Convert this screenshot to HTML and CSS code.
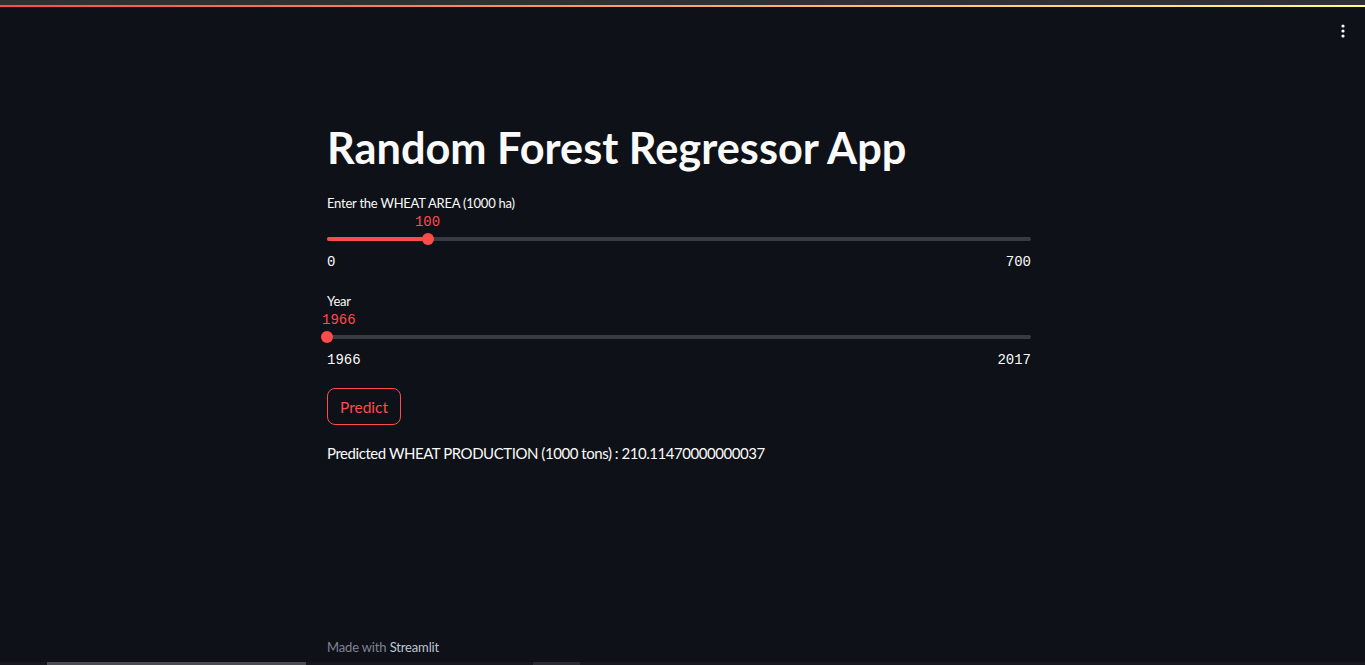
FILE: index.html
```html
<!DOCTYPE html>
<html>
<head>
<meta charset="utf-8">
<link rel="stylesheet" href="styles.css">
</head>
<body>
<div class="topbar"></div>
<div class="decoration"></div>
<button class="menu" aria-label="menu">
  <svg width="4" height="14" viewBox="0 0 4 14"><circle cx="2" cy="2" r="1.6" fill="#fafafa"/><circle cx="2" cy="7" r="1.6" fill="#fafafa"/><circle cx="2" cy="12" r="1.6" fill="#fafafa"/></svg>
</button>
<main class="main">
  <h1 class="title">Random Forest Regressor App</h1>
  <div class="slider-block first">
    <div class="label">Enter the WHEAT AREA (1000 ha)</div>
    <div class="slider">
      <div class="track">
        <div class="fill" style="width:14.2857%"></div>
        <div class="thumb" style="left:14.2857%"><span class="value">100</span></div>
      </div>
    </div>
    <div class="ticks"><span>0</span><span>700</span></div>
  </div>
  <div class="slider-block">
    <div class="label">Year</div>
    <div class="slider">
      <div class="track">
        <div class="fill" style="width:0%"></div>
        <div class="thumb" style="left:0%"><span class="value clamp">1966</span></div>
      </div>
    </div>
    <div class="ticks"><span>1966</span><span>2017</span></div>
  </div>
  <button class="predict">Predict</button>
  <p class="result">Predicted WHEAT PRODUCTION (1000 tons) : 210.11470000000037</p>
</main>
<footer class="footer">Made with <span class="brand">Streamlit</span></footer>
<div class="scrollbar"><div class="sb-thumb"></div><div class="sb-gap"></div><div class="sb-thumb2"></div></div>
</body>
</html>
```
FILE: styles.css
```css
* { box-sizing: border-box; }
html, body { margin: 0; padding: 0; }
body {
  background: #0e1117;
  color: #fafafa;
  font-family: "Lato", "Noto Sans", sans-serif;
  width: 1365px;
  height: 665px;
  overflow: hidden;
  position: relative;
  display: flex;
  flex-direction: column;
}
.topbar { height: 5px; background: #2f3033; }
.decoration { height: 2px; background: linear-gradient(90deg, #ff4b4b, #ffff80); }
.menu {
  position: absolute;
  top: 22px;
  left: 1337px;
  width: 12px;
  height: 18px;
  padding: 0;
  border: none;
  background: transparent;
  display: flex;
  align-items: center;
  justify-content: center;
}
.main {
  width: 704px;
  margin: 0 0 0 327px;
  padding-top: 110px;
  display: flex;
  flex-direction: column;
}
.title {
  margin: 0;
  font-size: 43.3px;
  font-weight: 700;
  line-height: 60px;
  color: #fafafa;
}
.slider-block { display: flex; flex-direction: column; }
.slider-block.first { margin-top: 16px; }
.label {
  font-size: 13px;
  letter-spacing: -0.23px;
  line-height: 20px;
  color: #fafafa;
}
.slider { height: 37px; display: flex; align-items: flex-end; padding-bottom: 9px; }
.track {
  position: relative;
  width: 100%;
  height: 4px;
  border-radius: 2px;
  background: #393b42;
}
.fill { height: 4px; border-radius: 2px; background: #ff4b4b; }
.thumb {
  position: absolute;
  top: -4px;
  width: 12px;
  height: 12px;
  margin-left: -6px;
  border-radius: 50%;
  background: #ff4b4b;
}
.value {
  position: absolute;
  bottom: 15px;
  left: 50%;
  transform: translateX(-50%);
  font-family: "Liberation Mono", "DejaVu Sans Mono", monospace;
  font-size: 14px;
  line-height: 16px;
  color: #ff4b4b;
}
.value.clamp { left: 1px; transform: none; }
.ticks {
  display: flex;
  justify-content: space-between;
  font-family: "Liberation Mono", "DejaVu Sans Mono", monospace;
  font-size: 14px;
  line-height: 16px;
  color: #fafafa;
  margin-top: 4px;
  margin-bottom: 21px;
}
.slider-block + .slider-block .ticks { margin-bottom: 20px; }
.predict {
  align-self: flex-start;
  width: 74px;
  height: 37px;
  border: 1px solid #ff4b4b;
  border-radius: 8px;
  background: transparent;
  color: #ff4b4b;
  font-family: "Lato", "Noto Sans", sans-serif;
  font-size: 15.5px;
  padding: 0;
}
.result {
  margin: 17px 0 0;
  font-size: 15px;
  letter-spacing: -0.45px;
  line-height: 22px;
  color: #fafafa;
}
.footer {
  position: absolute;
  left: 327px;
  top: 638px;
  font-size: 13px;
  letter-spacing: -0.15px;
  line-height: 18px;
  color: #808495;
}
.brand { color: #bfc5d3; }
.scrollbar {
  position: absolute;
  left: 0;
  bottom: 0;
  width: 1365px;
  height: 3px;
  background: #16181d;
  display: flex;
}
.sb-thumb { margin-left: 47px; width: 259px; background: #4a4c52; }
.sb-gap { width: 227px; }
.sb-thumb2 { width: 47px; background: #2a2c31; }
```
